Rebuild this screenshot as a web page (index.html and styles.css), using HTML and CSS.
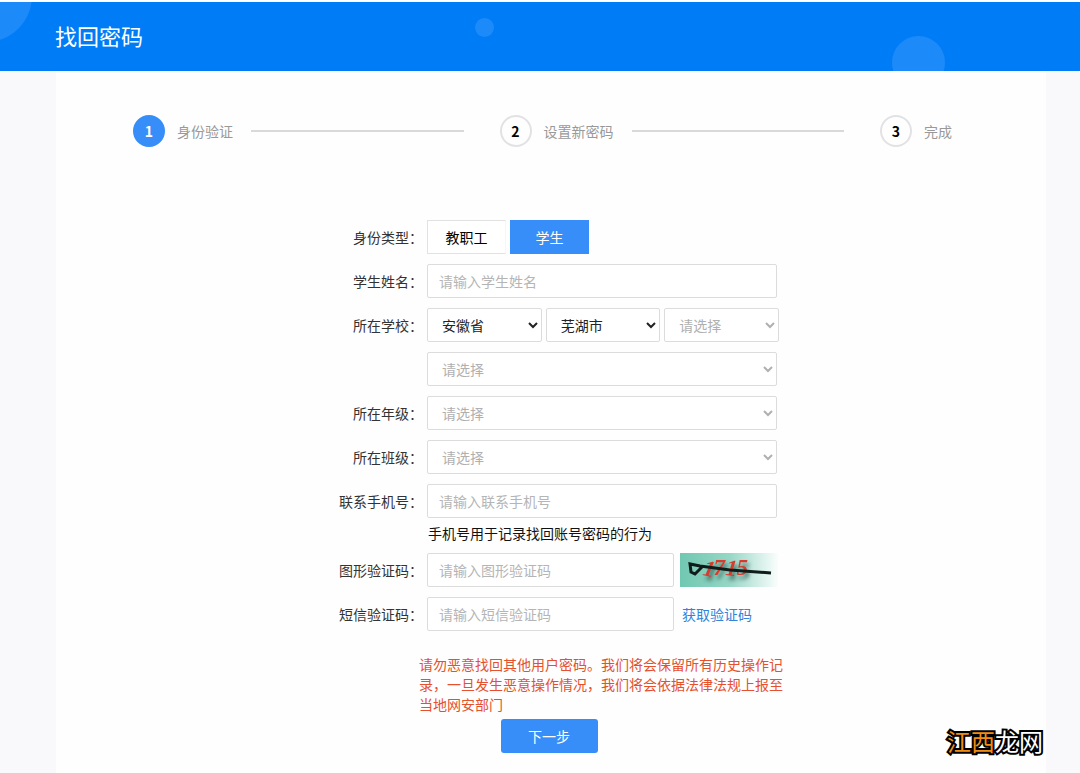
FILE: index.html
```html
<!DOCTYPE html>
<html lang="zh-CN">
<head>
<meta charset="utf-8">
<meta name="viewport" content="width=device-width, initial-scale=1">
<title>找回密码</title>
<link rel="stylesheet" href="styles.css">
</head>
<body>
<header class="banner">
  <span class="bubble bubble-corner"></span>
  <span class="bubble bubble-small"></span>
  <span class="bubble bubble-large"></span>
  <h1 class="banner-title">找回密码</h1>
</header>
<main class="panel">
  <ol class="steps">
    <li class="step step-active"><span class="step-num">1</span><span class="step-name">身份验证</span></li>
    <li class="step"><span class="step-num">2</span><span class="step-name">设置新密码</span></li>
    <li class="step"><span class="step-num">3</span><span class="step-name">完成</span></li>
  </ol>
  <form class="form">
    <div class="fields">
      <div class="row">
        <span class="label" id="type-label">身份类型：</span>
        <div class="tabs" role="group" aria-labelledby="type-label">
          <button class="tab" type="button">教职工</button>
          <button class="tab tab-on" type="button">学生</button>
        </div>
      </div>
      <div class="row">
        <label class="label" for="name">学生姓名：</label>
        <input class="control" id="name" type="text" placeholder="请输入学生姓名">
      </div>
      <div class="row">
        <label class="label" for="province">所在学校：</label>
        <div class="region">
          <select class="control select" id="province"><option>安徽省</option></select>
          <select class="control select" aria-label="城市"><option>芜湖市</option></select>
          <select class="control select" aria-label="区县" disabled><option>请选择</option></select>
        </div>
      </div>
      <div class="row">
        <span class="label"></span>
        <select class="control select" aria-label="学校" disabled><option>请选择</option></select>
      </div>
      <div class="row">
        <label class="label" for="grade">所在年级：</label>
        <select class="control select" id="grade" disabled><option>请选择</option></select>
      </div>
      <div class="row">
        <label class="label" for="class">所在班级：</label>
        <select class="control select" id="class" disabled><option>请选择</option></select>
      </div>
      <div class="row">
        <label class="label" for="phone">联系手机号：</label>
        <input class="control" id="phone" type="tel" placeholder="请输入联系手机号">
      </div>
      <p class="hint">手机号用于记录找回账号密码的行为</p>
      <div class="row">
        <label class="label" for="captcha">图形验证码：</label>
        <input class="control control-short" id="captcha" type="text" placeholder="请输入图形验证码">
        <svg class="captcha" viewBox="0 0 98 34" role="img" aria-label="图形验证码">
          <defs>
            <linearGradient id="mint" x1="0" y1="0" x2="1" y2="0">
              <stop offset="0" stop-color="#70c8b2"/>
              <stop offset="0.5" stop-color="#96d6c5"/>
              <stop offset="1" stop-color="#fafefd"/>
            </linearGradient>
          </defs>
          <rect width="98" height="34" fill="url(#mint)"/>
          <text class="captcha-code" x="22" y="22" rotate="12 0 6 0">1715</text>
          <path d="M22 14 15 21 11 19 10 11 20 13 50 17 91 20" fill="none" stroke="#101c1a" stroke-width="3"/>
        </svg>
      </div>
      <div class="row">
        <label class="label" for="sms">短信验证码：</label>
        <input class="control control-short" id="sms" type="text" placeholder="请输入短信验证码">
        <a class="send" href="#">获取验证码</a>
      </div>
      <p class="warning">请勿恶意找回其他用户密码。我们将会保留所有历史操作记录，一旦发生恶意操作情况，我们将会依据法律法规上报至当地网安部门</p>
    </div>
    <button class="next" type="button">下一步</button>
  </form>
</main>
<div class="watermark"><span class="watermark-warm">江西</span>龙网</div>
</body>
</html>
```
FILE: styles.css
```css
* {
  box-sizing: border-box;
}

body {
  margin: 0;
  padding-top: 2px;
  min-height: 100vh;
  display: flex;
  flex-direction: column;
  position: relative;
  background: #f9f8fb;
  color: #333;
  font: 14px/20px "Noto Sans CJK SC", sans-serif;
}

button,
input,
select {
  font: inherit;
}

.banner {
  position: relative;
  overflow: hidden;
  height: 69px;
  padding: 0 55px 4px;
  display: flex;
  align-items: center;
  background: #007cf6;
  box-shadow: 0 -2px #fff;
}

.banner-title {
  margin: 0;
  color: #fff;
  font-size: 22px;
  font-weight: 400;
  line-height: 32px;
}

.bubble {
  position: absolute;
  border-radius: 50%;
  background: #1c8af8;
}

.bubble-corner {
  left: -60px;
  top: -52px;
  width: 92px;
  height: 92px;
}

.bubble-small {
  left: 44%;
  top: 16px;
  width: 19px;
  height: 19px;
}

.bubble-large {
  right: 135px;
  top: 34px;
  width: 53px;
  height: 53px;
}

.panel {
  flex: 1;
  margin: 0 34px 0 56px;
  padding: 44px 0 20px;
  background: #fefefe;
}

.steps {
  display: flex;
  margin: 0 94px 0 77px;
  padding: 0;
  list-style: none;
}

.step {
  display: flex;
  align-items: center;
  flex: 1 1 auto;
}

.step:last-child {
  flex: none;
}

.step:not(:last-child)::after {
  content: "";
  flex: 1 0 0;
  height: 2px;
  margin: 0 36px 0 18px;
  background: #d9d9d9;
}

.step-num {
  width: 32px;
  height: 32px;
  margin-right: 12px;
  border: 2px solid #e2e2e5;
  border-radius: 50%;
  color: #000;
  font-weight: 700;
  line-height: 28px;
  text-align: center;
}

.step-active .step-num {
  border-color: #378ef8;
  background: #378ef8;
  color: #fff;
}

.step-name {
  color: #999;
}

.form {
  display: flex;
  flex-direction: column;
  align-items: center;
  margin-top: 73px;
  padding-right: 4px;
}

.fields {
  width: 468px;
  padding-left: 24px;
}

.row {
  display: flex;
  align-items: center;
  height: 34px;
  margin-bottom: 10px;
}

.label {
  flex: none;
  width: 84px;
  margin-right: 4px;
  text-align: right;
}

.control {
  width: 350px;
  height: 34px;
  padding: 0 11px;
  border: 1px solid #dcdcdc;
  border-radius: 2px;
  background: #fff;
  color: #222;
}

.control::placeholder {
  color: #b5b5b5;
}

.control-short {
  width: 247px;
  margin-right: 6px;
}

.select {
  padding: 0 0 0 10px;
}

.select:disabled {
  color: #b0b0b0;
  opacity: 1;
}

.region {
  display: flex;
  gap: 4px;
  width: 352px;
}

.region .select {
  flex: 1;
  min-width: 0;
}

.tabs {
  display: flex;
  gap: 4px;
}

.tab {
  width: 79px;
  height: 34px;
  padding: 0;
  border: 1px solid #e2e2e2;
  border-right-color: #f6f6f6;
  background: #fff;
  color: #000;
}

.tab-on {
  border-color: #378ef8;
  background: #378ef8;
  color: #fff;
}

.hint {
  margin: -5px 0 10px 89px;
  color: #111;
}

.captcha {
  flex: none;
  width: 98px;
  height: 34px;
}

.captcha-code {
  font: italic 700 23px "Liberation Serif", serif;
  fill: #d83a2e;
  filter: drop-shadow(2px 4px 2px #2f5a50);
}

.send {
  margin-left: 2px;
  color: #3183dc;
  text-decoration: none;
}

.warning {
  width: 364px;
  margin: 23px 0 5px 80px;
  color: #e5502d;
}

.next {
  width: 97px;
  height: 34px;
  padding: 0;
  border: 0;
  border-radius: 3px;
  background: #378ef8;
  color: #fff;
}

.watermark {
  position: absolute;
  right: 37px;
  bottom: 14px;
  color: #fff;
  font-size: 24px;
  line-height: 36px;
  -webkit-text-stroke: 4px #000;
  paint-order: stroke fill;
}

.watermark-warm {
  color: #f08c14;
}
```
